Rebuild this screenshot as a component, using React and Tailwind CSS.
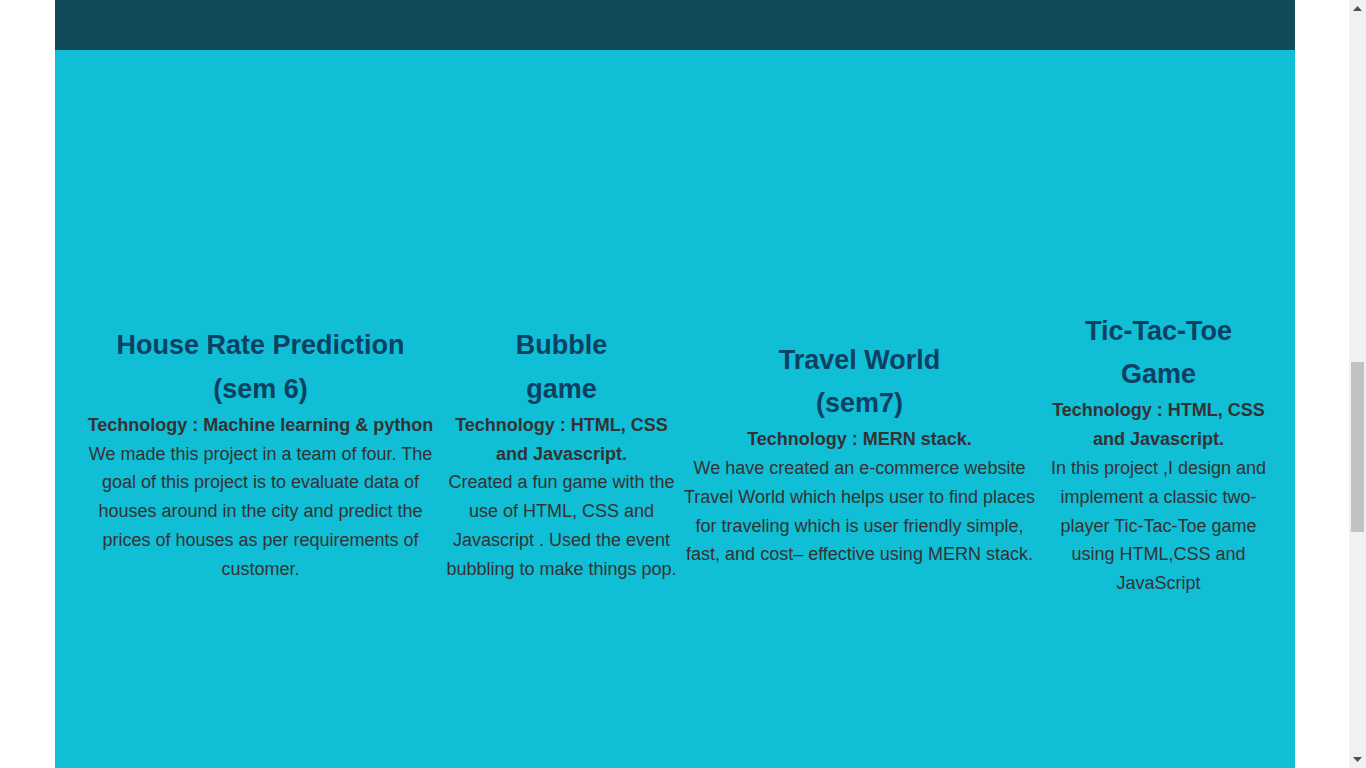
export default function App() {
  const projects = [
    {
      title: ["House Rate Prediction", "(sem 6)"],
      tech: "Technology : Machine learning & python",
      desc: "We made this project in a team of four. The goal of this project is to evaluate data of houses around in the city and predict the prices of houses as per requirements of customer.",
      w: "w-[360px]",
    },
    {
      title: ["Bubble", "game"],
      tech: "Technology : HTML, CSS and Javascript.",
      desc: "Created a fun game with the use of HTML, CSS and Javascript . Used the event bubbling to make things pop.",
      w: "w-[234px]",
    },
    {
      title: ["Travel World", "(sem7)"],
      tech: "Technology : MERN stack.",
      desc: "We have created an e-commerce website Travel World which helps user to find places for traveling which is user friendly simple, fast, and cost\u2013 effective using MERN stack.",
      w: "w-[354px]",
    },
    {
      title: ["Tic-Tac-Toe", "Game"],
      tech: "Technology : HTML, CSS and Javascript.",
      desc: "In this project ,I design and implement a classic two-player Tic-Tac-Toe game using HTML,CSS and JavaScript",
      w: "w-[236px]",
    },
  ];
  return (
    <div
      className="flex h-[768px] overflow-hidden bg-white"
      style={{ fontFamily: '"Liberation Sans", Arial, sans-serif' }}
    >
      <div className="flex-1">
        <div className="mx-auto w-[1240px]">
          <div className="h-[50px] bg-[#134a5b]" />
          <div className="flex h-[808px] items-center gap-[4px] bg-[#10bed6] pl-[26px]">
            {projects.map((p, i) => (
              <div key={i} className={`${p.w} shrink-0 text-center text-[18px] leading-[1.6] text-[#333333]`}>
                <h2 className="text-[27px] font-bold leading-[1.6] text-[#0e4062]">
                  {p.title[0]}
                  <br />
                  {p.title[1]}
                </h2>
                <p className="font-bold">{p.tech}</p>
                <p>{p.desc}</p>
              </div>
            ))}
          </div>
        </div>
      </div>
      <div className="flex w-[17px] shrink-0 flex-col items-center bg-[#f1f1f1]">
        <div className="flex h-[17px] items-center justify-center">
          <svg width="9" height="5" viewBox="0 0 9 5">
            <path d="M0 5 L4.5 0 L9 5 Z" fill="#505050" />
          </svg>
        </div>
        <div className="flex-1 w-full px-[2px]">
          <div className="mt-[345px] h-[170px] w-full bg-[#c1c1c1]" />
        </div>
        <div className="flex h-[17px] items-center justify-center">
          <svg width="9" height="5" viewBox="0 0 9 5">
            <path d="M0 0 L9 0 L4.5 5 Z" fill="#505050" />
          </svg>
        </div>
      </div>
    </div>
  );
}
